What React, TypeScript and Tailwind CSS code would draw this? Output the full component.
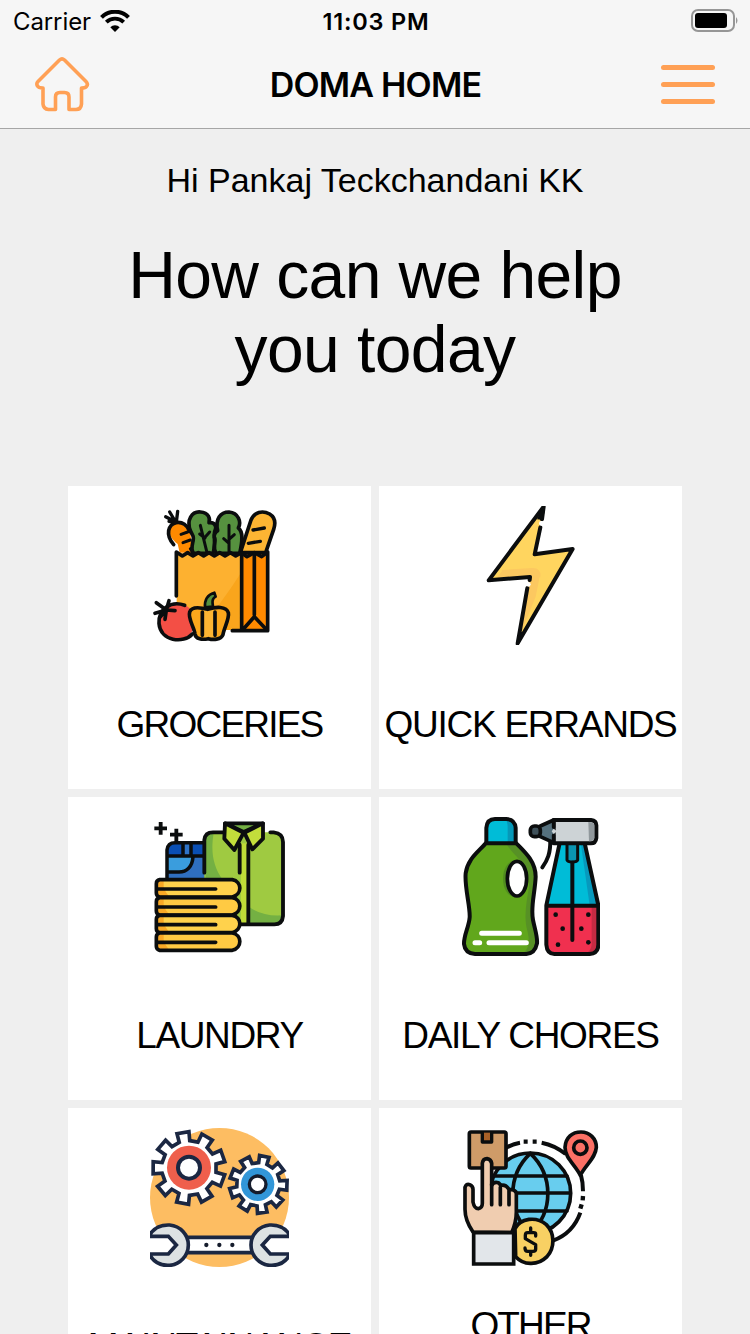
import type { ReactNode } from "react";

const INK = "#0b0d0e";
const NAVY = "#1b2742";

function Icon({ box, children }: { box: string; children: ReactNode }) {
  return (
    <svg
      className="h-[139px] w-[139px] shrink-0"
      viewBox={box}
      fill="none"
      strokeLinejoin="round"
      strokeLinecap="round"
    >
      {children}
    </svg>
  );
}

function Groceries() {
  return (
    <Icon box="15 18 417 417">
      <path d="M95 160H290V390H95Z" fill="#fdb130" />
      <path d="M290 215V390H160Q230 310 290 215Z" fill="#f9a51c" />
      <path d="M290 160H370V392H290Z" fill="#ff8a00" />
      <g stroke={INK} strokeWidth="11">
        <path d="M98 132C66 108 66 78 88 70C108 62 128 74 134 92L146 158H104Z" fill="#ff8a00" stroke="none" />
        <path d="M86 134C60 104 70 74 92 68C112 64 128 76 134 94" />
        <path d="M92 66L62 50M92 66L74 36M94 66L98 34M92 68L72 64" strokeWidth="10" />
        <path d="M108 103L128 96M114 128L136 120M136 146L142 156" strokeWidth="9" />
        <path d="M136 92C124 60 140 34 166 36C192 38 196 56 192 68C210 66 216 80 210 92C204 104 214 130 204 160H146C132 144 150 122 144 108Z" fill="#56913f" />
        <path d="M218 92C210 58 226 36 252 36C280 38 290 66 280 84C296 96 292 126 284 160H214C200 142 216 124 208 112C206 102 212 96 218 92Z" fill="#56913f" />
        <path d="M166 76L186 158M180 112L194 96M180 114L164 102M252 76V158M252 118L268 104M252 130L236 116" strokeWidth="9" />
        <path d="M286 158L318 60C328 36 352 30 374 42C390 52 392 70 386 88L362 158Z" fill="#fdb533" />
        <path d="M324 90L358 84M310 130L346 124" strokeWidth="10" />
      </g>
      <path d="M95 166V156L112 166L128 156L144 166L160 156L176 166L192 156L208 166L224 156L240 166L256 156L272 166L290 156V180H95Z" fill="#fdb130" />
      <path d="M290 158L306 168L328 158L350 168L368 156V185H290Z" fill="#ff8a00" />
      <g stroke={INK} strokeWidth="11">
        <path d="M94 288V156L112 168L128 158L144 168L160 158L176 168L192 158L208 168L224 158L240 168L256 158L272 168L290 158L306 170L328 158L350 170L368 156V392H262" />
        <path d="M290 160V390M328 162V344M296 386L328 350L362 386" />
      </g>
      <circle cx="97" cy="364" r="54" fill="#f34f45" />
      <path d="M119 316C76 300 40 330 42 370C46 424 116 432 142 402" stroke={INK} strokeWidth="11" />
      <path d="M64 330L34 308M64 330L30 340M64 330L72 302M64 330L60 358M64 330L90 332M64 330L46 350" stroke={INK} strokeWidth="11" />
      <path d="M134 336C140 318 166 322 188 328C212 320 244 318 250 338C254 356 236 386 234 404C228 420 204 420 190 416C172 420 152 418 150 402C148 382 128 356 134 336Z" fill="#fba71c" />
      <path d="M172 334C184 322 200 322 210 334V406C202 418 180 418 172 406Z" fill="#fdb533" />
      <g stroke={INK} strokeWidth="11">
        <path d="M134 336C140 318 166 322 188 328C212 320 244 318 250 338C254 356 236 386 234 404C228 420 204 420 190 416C172 420 152 418 150 402C148 382 128 356 134 336Z" />
        <path d="M172 336V406M210 336V406" />
        <path d="M180 322C178 296 188 284 208 278L212 290C200 296 202 308 204 320Z" fill="#56913f" strokeWidth="8" />
      </g>
    </Icon>
  );
}

function Bolt() {
  return (
    <Icon box="18 18 417 417">
      <path d="M266 22L100 240L224 231L188 428L354 148L238 163Z" fill="#ffd55f" />
      <path d="M126 232L142 212L232 206C250 206 256 216 254 230L242 290L200 394L190 400L224 231Z" fill="#fcc860" />
      <path d="M142 212L232 206C250 206 256 216 254 230" stroke="#fcc860" strokeWidth="4" />
      <g stroke={INK} strokeWidth="12">
        <path d="M256 82L239 163L353 147L188 430L217 264" />
        <path d="M224 240L225 231L101 241L266 20L261 58" />
      </g>
      <path d="M266 14L246 58L264 60L269 32ZM182 436L192 394L208 400L190 436Z" fill={INK} />
      <circle cx="259" cy="70" r="7" fill="#fff" />
      <circle cx="220" cy="253" r="7" fill="#fff" />
    </Icon>
  );
}

function Laundry() {
  return (
    <Icon box="15 21 417 417">
      <path d="M66 206V120Q68 98 90 98H180V206Z" fill="#2f6fc0" />
      <path d="M66 136V120Q68 98 90 98H180V136Z" fill="#0a4fb4" />
      <path d="M114 102H136V136H114Z" fill="#2f74c8" />
      <path d="M66 140H144C142 170 126 188 98 186H66Z" fill="#3a9ddd" />
      <path d="M178 208V90Q180 68 204 67H386Q414 70 414 96V318Q412 340 390 343H270V208Z" fill="#9fca41" />
      <path d="M182 208V90Q184 70 206 68C196 130 206 170 232 208ZM312 290Q350 320 412 316Q412 340 390 343H312Z" fill="#74b043" />
      <path d="M288 100H308V342H288Z" fill="#bfdc38" />
      <g stroke={INK} strokeWidth="11.500">
        <path d="M66 206V120Q68 98 90 98H176M68 138H176M114 102V136M138 102V136M144 140C142 170 126 188 98 186H68" strokeWidth="10.500" />
        <path d="M178 188V90Q180 67 204 67H236M376 67H386Q414 70 414 96V318Q412 343 388 343H286" />
        <path d="M284 188V104M310 104V340" />
        <path d="M240 40H354L296 66Z" fill="#74b043" />
        <path d="M240 40L296 68L268 120L238 86ZM354 40L298 68L322 118L354 86Z" fill="#c3de3b" />
        <path d="M47 36V74M28 55H66M94 56V94M75 74H113" strokeLinecap="butt" />
      </g>
      {[209, 263, 316, 369].map((y, i) => (
        <g key={y} transform={`translate(0 ${y})`}>
          <path d="M42 0H262C292 6 292 44 262 52H42Q34 50 34 40V10Q34 2 42 0Z" fill={i % 2 ? "#ffca43" : "#ffd24c"} />
          <path d="M38 4H56V22Q60 36 72 50H40Q34 46 34 40Z" fill="#f9a926" />
          <path d="M44 0H262C292 6 292 44 262 52H44Q34 50 34 40V12Q34 2 44 0ZM38 28H212" stroke={INK} strokeWidth="11" />
        </g>
      ))}
    </Icon>
  );
}

function Cleaning() {
  return (
    <Icon box="18 21 417 417">
      <path d="M94 98V54Q96 27 120 27H154Q180 28 182 54V98Z" fill="#00bcd7" />
      <path d="M152 30Q178 32 178 56V96H158V52Q158 36 152 30Z" fill="#0698b8" />
      <path d="M92 100H184C208 124 242 154 242 200C240 250 226 290 234 330C240 360 248 380 246 400Q240 430 214 432H60Q30 430 27 402C26 376 42 350 44 322C46 290 28 230 32 190C38 146 70 126 92 100Z" fill="#61a71c" />
      <path d="M156 104H184C208 124 242 154 242 200C240 250 226 290 234 330C240 360 248 380 246 400Q240 430 214 432H194C220 426 226 400 218 366C204 320 216 270 222 230C224 160 176 140 156 104Z" fill="#579125" />
      <g stroke={INK} strokeWidth="12">
        <path d="M94 98V54Q96 27 120 27H154Q180 28 182 54V98" />
        <path d="M92 100H184C208 124 242 154 242 200C240 250 226 290 234 330C240 360 248 380 246 400Q240 430 214 432H60Q30 430 27 402C26 376 42 350 44 322C46 290 28 230 32 190C38 146 70 126 92 100Z" />
      </g>
      <ellipse cx="178" cy="206" rx="34" ry="54" fill="#518d20" />
      <ellipse cx="186" cy="206" rx="29" ry="52" fill="#fff" stroke={INK} strokeWidth="11" />
      <path d="M80 370H193M60 398H74M102 398H214" stroke="#fff" strokeWidth="15" />
      <path d="M313 104H390L430 286H274Z" fill="#00bcd7" />
      <path d="M378 104H390L430 286H404Z" fill="#0799bd" />
      <path d="M274 288H430V404Q426 432 404 432H298Q274 430 274 404Z" fill="#f0304f" />
      <path d="M410 288H430V404Q426 432 404 432H386Q408 426 410 404Z" fill="#c52b43" />
      <path d="M336 104H368V150Q366 156 352 156Q338 156 336 150Z" fill="#0a94b0" />
      <g stroke={INK} strokeWidth="12">
        <path d="M313 104L274 286V404Q276 432 298 432H404Q430 430 430 404V286L390 104M276 287H428" />
        <path d="M336 106V150Q338 156 352 156Q366 156 368 150V106" strokeWidth="9" />
        <path d="M352 158V390" />
        <path d="M286 92C286 130 278 150 262 172" />
        <path d="M296 30H408Q424 32 424 46V84Q422 100 408 100H296Z" fill="#cdd3d6" />
      </g>
      <path d="M400 36Q418 36 418 48V84Q417 94 402 94Z" fill="#90989c" />
      <path d="M256 48L298 32V98L256 80Z" fill="#55707d" />
      <path d="M256 48L296 30M256 80L296 98M296 30V52M296 76V98" stroke={INK} strokeWidth="11" />
      <path d="M296 56L306 64L296 72L290 64Z" fill="#cdd3d6" />
      <rect x="226" y="48" width="30" height="32" rx="12" fill="#3f515a" stroke={INK} strokeWidth="11" />
      <g fill={INK}>
        <circle cx="302" cy="314" r="7" />
        <circle cx="400" cy="314" r="7" />
        <circle cx="323" cy="356" r="7" />
        <circle cx="379" cy="356" r="7" />
        <circle cx="309" cy="404" r="7" />
        <circle cx="400" cy="397" r="7" />
      </g>
    </Icon>
  );
}

function gearPath(cx: number, cy: number, outer: number, inner: number, teeth: number, turn: number) {
  const step = (Math.PI * 2) / teeth;
  const points: string[] = [];
  for (let i = 0; i < teeth; i++) {
    const a = turn + i * step;
    const corners: [number, number][] = [
      [inner, -0.28],
      [outer, -0.24],
      [outer, 0.24],
      [inner, 0.28],
    ];
    for (const [r, f] of corners) {
      points.push(`${(cx + r * Math.cos(a + f * step)).toFixed(1)} ${(cy + r * Math.sin(a + f * step)).toFixed(1)}`);
    }
  }
  return `M${points.join("L")}Z`;
}

function Maintenance() {
  return (
    <Icon box="15 18 417 417">
      <circle cx="223.500" cy="226.500" r="208.500" fill="#fdbd62" />
      <g strokeLinejoin="miter">
        <path d={gearPath(132, 138, 109, 82, 9, -1.74)} fill="#fff" stroke={NAVY} strokeWidth="11" />
        <circle cx="132" cy="137" r="66" fill="#ef5f4c" />
        <circle cx="132" cy="137" r="33" fill="#fff" stroke={NAVY} strokeWidth="12" />
        <path d={gearPath(340, 187, 87, 65, 9, -1.36)} fill="#fff" stroke={NAVY} strokeWidth="11" />
        <circle cx="338" cy="187" r="50" fill="#3296d8" />
        <circle cx="338" cy="187" r="25" fill="#fff" stroke="#151c2c" strokeWidth="10" />
      </g>
      <path d="M0 343H72L94 369L72 396H0ZM450 343H374L352 369L374 396H450Z" fill="#fff" />
      <path d="M120 346H328V392H120Z" fill="#fff" stroke={NAVY} strokeWidth="11" />
      <g fill="#dde2e3" stroke={NAVY} strokeWidth="11" strokeLinejoin="miter">
        <path d="M12 343C28 312 54 308 74 309C106 312 130 338 130 369C130 402 104 428 74 430C50 432 28 424 12 396H70L94 369L70 343Z" />
        <path d="M436 343C420 312 394 308 374 309C342 312 318 338 318 369C318 402 344 428 374 430C398 432 420 424 436 396H376L352 369L376 343Z" />
      </g>
      <g fill="#151c2c">
        <circle cx="184" cy="369" r="6.500" />
        <circle cx="223" cy="369" r="6.500" />
        <circle cx="262" cy="369" r="6.500" />
      </g>
    </Icon>
  );
}

function Other() {
  return (
    <Icon box="18 18 417 417">
      <g stroke={INK} strokeWidth="11">
        <g strokeLinecap="butt">
          <path d="M150 80Q170 66 195 62M260 62Q300 70 332 96M378 160Q384 180 384 208M376 272Q354 334 294 356" strokeWidth="12" />
          <path d="M206 59H218M233 59H245M384 222L383 235M380 247L376 260" strokeWidth="13" />
        </g>
        <circle cx="226" cy="214" r="121" fill="#68cdee" />
        <path d="M226 94C156 160 156 270 226 334M226 94C296 160 296 270 226 334M116 162H336M106 213H346M116 267H336" />
        <rect x="43" y="30" width="110" height="108" rx="5" fill="#cf9b68" />
        <path d="M82 32V60H110V32" fill="#a86027" strokeWidth="10" />
        <path d="M376 160C360 128 330 108 330 76C332 46 352 30 378 30C404 30 424 50 424 76C422 108 392 128 376 160Z" fill="#fc7065" />
        <circle cx="376" cy="77" r="20" fill="#fc7065" />
        <path
          d="M54 330C40 310 30 290 30 262V196Q34 184 44 188Q54 192 54 202V240Q58 260 70 260Q82 258 82 244V124Q84 110 96 110Q108 112 110 124V190Q116 178 130 182L138 190Q152 186 162 202Q182 202 184 214V270Q184 300 170 332Z"
          fill="#f0cdb0"
        />
        <path d="M110 186V248M136 196V248M162 206V248" />
        <path d="M56 332H176V426H56Z" fill="#e2e6ea" strokeLinejoin="miter" />
        <path d="M180 320C196 288 244 282 274 308C300 334 300 376 276 404C246 434 204 428 182 404Z" fill="#f8d063" />
        <path d="M242 342V336Q242 332 236 332H218Q211 332 211 340V350L242 368V382Q242 388 234 388H218Q210 388 210 378M227 318V330M227 390V400" strokeWidth="10" />
      </g>
    </Icon>
  );
}

const services: { label: string; icon: ReactNode; fit: string }[] = [
  { label: "GROCERIES", icon: <Groceries />, fit: "pt-[15px] tracking-[-1.8px]" },
  { label: "QUICK ERRANDS", icon: <Bolt />, fit: "pt-[15px] tracking-[-1.25px]" },
  { label: "LAUNDRY", icon: <Laundry />, fit: "pt-[15px] tracking-[-1.4px]" },
  { label: "DAILY CHORES", icon: <Cleaning />, fit: "pt-[15px] tracking-[-1.3px]" },
  { label: "MAINTAINANCE", icon: <Maintenance />, fit: "pt-[15px] tracking-[-1.1px]" },
  { label: "OTHER", icon: <Other />, fit: "pb-[27px] tracking-[-1.9px]" },
];

function StatusBar() {
  return (
    <div className="grid h-10 grid-cols-3 items-center pr-[11px] pl-[13px]">
      <div className="flex items-center gap-[9px]">
        <span className="pt-0.5 text-[24px] leading-10 tracking-[-0.1px]">Carrier</span>
        <svg className="h-[22px] w-[30px]" viewBox="0 0 30 22" fill="none" stroke="#000">
          <path d="M1.500 7.300A19 19 0 0 1 28.500 7.300" strokeWidth="4" />
          <path d="M6.300 12.200A12.300 12.300 0 0 1 23.700 12.200" strokeWidth="3.800" />
          <path d="M10.300 17.200A6.500 6.500 0 0 1 19.700 17.200L15 22Z" fill="#000" stroke="none" />
        </svg>
      </div>
      <span className="pt-0.5 text-center text-[23.500px] leading-10 font-semibold tracking-[0.8px] whitespace-nowrap">11:03 PM</span>
      <svg className="h-6 w-12 justify-self-end" viewBox="0 0 48 24">
        <rect x="1" y="1" width="42" height="21" rx="6" fill="none" stroke="#969696" strokeWidth="2" />
        <rect x="4" y="4" width="32" height="15" rx="3" fill="#000" />
        <path d="M45 8Q48 11.500 45 15Z" fill="#969696" />
      </svg>
    </div>
  );
}

export default function App() {
  return (
    <div className="flex h-[1334px] w-[750px] flex-col overflow-hidden bg-[#efefef] font-['Liberation_Sans',Arial,sans-serif] text-black">
      <header className="h-[129px] shrink-0 border-b border-[#a6a6a6] bg-[#f6f6f6] font-[Inter,sans-serif]">
        <StatusBar />
        <div className="flex h-[88px] items-center justify-between px-[35px]">
          <svg
            className="h-[55px] w-[55px]"
            viewBox="0 0 55 55"
            fill="none"
            stroke="#ffa055"
            strokeWidth="3.600"
            strokeLinejoin="round"
            strokeLinecap="round"
          >
            <path d="M24.500 3Q27 .8 29.500 3L51 24.500Q53.500 27 51.500 29.500Q50.500 31 46.500 31V47Q46 52.500 41 52.500H34V40Q34 35.500 29.500 35.500H25Q20.500 35.500 20.500 40V52.500H13.500Q8.500 52 8 47V31Q3.500 31 2.500 29Q1 26.500 3 24.500Z" />
          </svg>
          <h1 className="pt-0.5 text-[34px] leading-10 font-semibold tracking-[-0.8px]">DOMA HOME</h1>
          <div className="flex w-[54px] flex-col gap-[12px]">
            <span className="h-[5px] rounded-full bg-[#ffa055]" />
            <span className="h-[5px] rounded-full bg-[#ffa055]" />
            <span className="h-[5px] rounded-full bg-[#ffa055]" />
          </div>
        </div>
      </header>
      <main className="flex flex-col items-center">
        <p className="mt-[31px] text-[34px] leading-[40px]">Hi Pankaj Teckchandani KK</p>
        <h2 className="mt-[38px] w-[560px] text-center text-[66px] leading-[74px] tracking-[-0.6px]">How can we help you today</h2>
        <div className="mt-[100px] grid grid-cols-2 gap-2">
          {services.map(({ label, icon, fit }) => (
            <section key={label} className="flex h-[303px] w-[303px] flex-col items-center bg-white pt-5">
              {icon}
              <div className={`flex flex-1 items-center justify-center text-[37px] leading-[42px] whitespace-nowrap ${fit}`}>
                {label}
              </div>
            </section>
          ))}
        </div>
      </main>
    </div>
  );
}
